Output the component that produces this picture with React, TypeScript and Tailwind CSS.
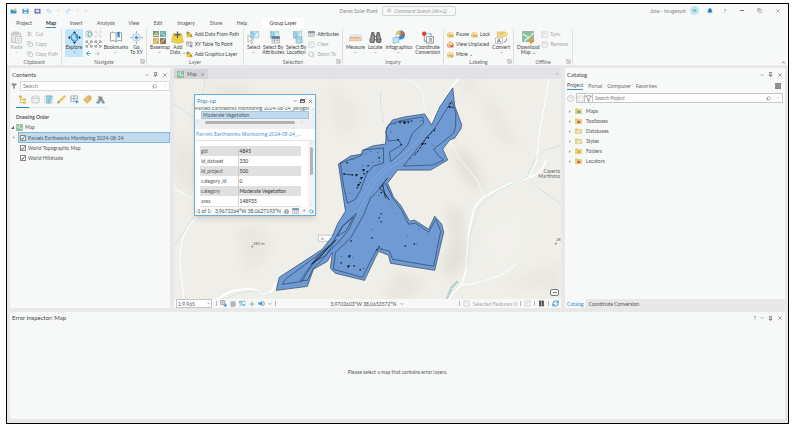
import type { ReactNode } from 'react'
import {
  ArrowLeft,
  ArrowRight,
  Bell,
  Binoculars,
  ChevronDown,
  ChevronUp,
  Copy,
  Filter,
  Pause,
  Pencil,
  Pin,
  Printer,
  Redo2,
  RefreshCw,
  Scissors,
  Search,
  SquareArrowDownRight,
  Tag,
  Undo2,
  X,
} from 'lucide-react'

type IconProps = { className?: string }

const PasteIcon = ({ className = 'size-[13px]' }: IconProps) => (
  <svg viewBox="0 0 24 24" className={className} fill="none" stroke="#b9bbbb" strokeWidth="1.500">
    <path d="M8 4H3v17h6M14 4h5v5" fill="#e6e6e6" />
    <path d="M7 2h8v5H7z" fill="#d4d4d4" />
    <path d="M10 10h11v12H10z" fill="#f4f4f4" />
    <path d="M13 14h5M13 18h5" />
  </svg>
)

const ExploreIcon = () => (
  <svg viewBox="0 0 30 30" className="size-[13px]">
    <circle cx="15" cy="15" r="9" fill="#2f93d6" />
    <path d="M8 12c3-5 7-5 9-3s-1 4 1 6 4 3 1 6-8 0-9-3z" fill="#a6dbf5" />
    <path d="M15 0l4 5h-8zM15 30l4-5h-8zM0 15l5-4v8zM30 15l-5-4v8z" fill="#333" />
  </svg>
)

const ExtentIcon = ({ stroke = '#666' }: { stroke?: string }) => (
  <svg viewBox="0 0 16 16" className="size-2" fill="none" stroke={stroke} strokeWidth="1.500">
    <path d="M2 6V2h4M10 2h4v4M14 10v4h-4M6 14H2v-4M4 4l3 3M12 4L9 7M4 12l3-3M12 12L9 9" />
  </svg>
)

const GlobeIcon = () => (
  <svg viewBox="0 0 16 16" className="size-2">
    <circle cx="8" cy="8" r="7" fill="#d9eef3" stroke="#9aabb0" />
    <path d="M5 3c3 0 3 3 1 5s3 3 2 6M10 3c3 2 4 6 2 8" stroke="#72a87a" strokeWidth="2" fill="none" />
  </svg>
)

const BookmarksIcon = () => (
  <svg viewBox="0 0 28 26" className="h-3 w-[14px]" fill="#fff" stroke="#777" strokeWidth="1.500">
    <path d="M14 5C10 2 6 2 2 4v18c4-2 8-2 12 1 4-3 8-3 12-1V4c-4-2-8-2-12 1zM14 5v18" />
    <path d="M17 2h5v13l-2.500-3-2.500 3z" fill="#2c83c4" stroke="none" />
  </svg>
)

const GoToIcon = () => (
  <svg viewBox="0 0 28 28" className="size-[13px]" fill="none" stroke="#8ab9d8" strokeWidth="1.500">
    <path d="M14 0v28M0 14h28" stroke="#999" />
    <circle cx="14" cy="14" r="8" fill="#eef6fa" />
    <circle cx="14" cy="14" r="3.500" fill="#3a97d3" />
  </svg>
)

const BasemapIcon = () => (
  <svg viewBox="0 0 26 26" className="size-[13px]">
    <path d="M0 0h12v12H0z" fill="#7e9a72" />
    <path d="M14 0h12v12H14z" fill="#6fb0b6" />
    <path d="M0 14h12v12H0z" fill="#d7b56b" />
    <path d="M14 14h12v12H14z" fill="#8d7a5d" />
    <path d="M2 9l5-6 4 6zM16 3l8 7M2 23l8-7M16 24c2-6 5-4 8-9" stroke="#e8dfb9" strokeWidth="2" fill="none" />
  </svg>
)

const AddDataIcon = () => (
  <svg viewBox="0 0 26 26" className="size-[13px]">
    <path d="M4 5h17l4 18-12 2-12-3z" fill="#ecd04a" stroke="#dcb93a" />
    <path d="M13 1v13M6.500 7.500h13" stroke="#545b5c" strokeWidth="2.500" />
  </svg>
)

const PlusLayerIcon = () => (
  <svg viewBox="0 0 16 16" className="size-[7px]">
    <path d="M1 4h10l4 10H1z" fill="#ecc94a" />
    <path d="M4 1v7M1 4h7" stroke="#555" strokeWidth="1.500" />
    <path d="M8 13l4-6 3 6z" fill="#b88c22" />
  </svg>
)

const XyIcon = () => (
  <svg viewBox="0 0 16 16" className="size-[7px]" fill="none" stroke="#777">
    <path d="M1 2h13v9H1zM1 5h13M5 2v9M10 2v9" />
    <circle cx="12" cy="12" r="2.500" fill="#8067ad" stroke="none" />
  </svg>
)

const SelectIcon = ({ variant = 'arrow' }: { variant?: 'arrow' | 'table' | 'location' }) => (
  <svg viewBox="0 0 28 28" className="size-[13px]">
    <path d="M8 1h17v14H8z" fill="#d9f1fa" stroke="#8ca6b0" />
    <path d="M8 1l10 4-4 10H8zM18 5l7-4" fill="#8fd4f1" stroke="#8ca6b0" />
    {variant === 'arrow' && <path d="M2 9v15l4-4 3 7 3-1-3-7h5z" fill="#fff" stroke="#777" />}
    {variant === 'table' && (
      <g stroke="#777" fill="#fff">
        <path d="M11 12h16v14H11zM11 17h16M11 21h16M16 12v14M22 12v14" />
        <path d="M11 12h16v4H11z" fill="#397eb4" />
      </g>
    )}
    {variant === 'location' && (
      <path d="M13 12h13v14H13zM13 18l6-3 7 4" fill="#a9def4" stroke="#7c99a5" />
    )}
  </svg>
)

const TableIcon = () => (
  <svg viewBox="0 0 16 14" className="h-[6px] w-[7px]" fill="#fff" stroke="#8a8f91">
    <path d="M1 1h14v12H1zM1 5h14M1 9h14M6 1v12M11 1v12" />
    <path d="M1 1h14v3H1z" fill="#4287bd" />
  </svg>
)

const DimIcon = () => (
  <svg viewBox="0 0 16 16" className="size-[7px]" fill="none" stroke="#c5c8c8" strokeWidth="1.500">
    <path d="M2 2h12v12H2zM5 10l5-5M5 5h3" />
  </svg>
)

const AddGridIcon = () => (
  <svg viewBox="0 0 16 16" className="size-[7px]" fill="none" stroke="#87909a" strokeWidth="1.500">
    <path d="M1 1h10v9H1zM1 5h10M6 1v9" />
    <path d="M12 8v8M8 12h8" stroke="#2788c9" strokeWidth="2" />
  </svg>
)

const MeasureIcon = () => (
  <svg viewBox="0 0 28 28" className="size-[13px]">
    <path d="M1 13h26v8H1z" fill="#f6d8bf" stroke="#d4946b" />
    <path d="M5 13v4M9 13v5M13 13v4M17 13v5M21 13v4" stroke="#b0734c" />
    <path d="M1 9h26" stroke="#9cc0d0" />
  </svg>
)

const InfographicsIcon = () => (
  <svg viewBox="0 0 28 28" className="size-[14px]">
    <circle cx="17" cy="10" r="9" fill="#318fd0" />
    <path d="M17 10V1a9 9 0 00-8 5z" fill="#f0c238" />
    <path d="M17 10L9 6a9 9 0 002 11z" fill="#eee" stroke="#999" />
    <path d="M17 10h9a9 9 0 00-6-8z" fill="#de5d3c" />
    <path d="M2 15h12v10H7l-3 3v-3H2z" fill="#bfe4f6" stroke="#6ba7c8" />
  </svg>
)

const CoordinateIcon = () => (
  <svg viewBox="0 0 28 28" className="size-[13px]" fill="none" stroke="#6d7376" strokeWidth="1.500">
    <path d="M7 8v14h6M12 12h15v14H12zM17 16h7M17 19h7M17 22h7" />
    <circle cx="7" cy="6" r="5" fill="#d4482f" stroke="none" />
    <path d="M14 6h8v6" stroke="#3a8fc9" />
  </svg>
)

const LabelLockIcon = ({ tint = '#e3b23c' }: { tint?: string }) => (
  <svg viewBox="0 0 16 16" className="size-[7px]">
    <path d="M1 7l6-5 7 4v8H2z" fill="#fbe8b4" stroke={tint} strokeWidth="1.500" />
    <path d="M8 9h6v5H8z" fill={tint} />
    <path d="M4 12l2-5 2 5" stroke="#666" fill="none" />
  </svg>
)

const ConvertIcon = () => (
  <svg viewBox="0 0 28 28" className="size-[13px]">
    <path d="M5 2h17l5 5-5 5H5z" fill="#f6dc8a" stroke="#c69d31" />
    <path d="M9 6h9" stroke="#a8811e" />
    <path d="M1 15h15v12H1z" fill="#fff" stroke="#777" />
    <path d="M5 25l3.500-8 3.500 8M6 22h5M19 24c5 0 6-4 6-8" stroke="#555" fill="none" strokeWidth="1.500" />
  </svg>
)

const DownloadMapIcon = () => (
  <svg viewBox="0 0 28 28" className="size-[13px]">
    <path d="M1 1h24v22H1z" fill="#8bc09c" stroke="#6c8d77" />
    <path d="M1 8c8-2 7 7 15 5s3-8 9-8M6 23c0-7 6-5 8-8" stroke="#dff0f4" strokeWidth="3" fill="none" />
    <path d="M20 10v15M14 20l6 6 6-6" stroke="#e89532" strokeWidth="3" fill="none" />
  </svg>
)

const MapThumb = () => (
  <svg viewBox="0 0 16 16" className="size-[7px] shrink-0">
    <path d="M1 1h14v14H1z" fill="#8fc5a0" stroke="#7c8c82" />
    <path d="M1 6c6 0 5 5 14 4M8 1v5" stroke="#e5f3ee" strokeWidth="2" fill="none" />
  </svg>
)

const FolderIcon = ({ accent }: { accent: string }) => (
  <svg viewBox="0 0 18 16" className="h-[6px] w-[7px]">
    <path d="M1 2h6l2 2h8v11H1z" fill="#eed06b" stroke="#d1ad43" />
    <path d="M5 7h9v7H5z" fill={accent} stroke="#fff" strokeWidth=".7" />
  </svg>
)

const Divider = () => <span className="h-[5px] w-px bg-[#b5b8b8]" />

const PaneControls = ({ help = false }: { help?: boolean }) => (
  <div className="flex items-center gap-1 text-[#555]">
    {help && <button aria-label="Help">?</button>}
    <button aria-label="Pane options">
      <ChevronDown className="size-1" strokeWidth={3} />
    </button>
    <button aria-label="Pin">
      <Pin className="size-[5px]" strokeWidth={3} />
    </button>
    <button aria-label="Close">
      <X className="size-[6px]" strokeWidth={2} />
    </button>
  </div>
)

type BigButtonProps = { icon: ReactNode; lines: string[]; drop?: boolean; className?: string }

const BigButton = ({ icon, lines, drop = false, className = 'text-[#444]' }: BigButtonProps) => (
  <button className={`flex h-7 shrink-0 flex-col items-center whitespace-nowrap ${className}`}>
    <span className="flex h-4 items-center">{icon}</span>
    {lines.map((line) => (
      <span key={line} className="leading-[5px]">
        {line}
      </span>
    ))}
    {drop && <ChevronDown className="mt-px size-[3px]" strokeWidth={3} />}
  </button>
)

const SmallButton = ({ icon, label, muted = false }: { icon: ReactNode; label: string; muted?: boolean }) => (
  <button className={`flex h-[10px] items-center gap-[2px] whitespace-nowrap ${muted ? 'text-[#a5a7a7]' : 'text-[#444]'}`}>
    {icon}
    {label}
  </button>
)

type GroupProps = { label: string; className: string; launcher?: boolean; children: ReactNode }

const RibbonGroup = ({ label, className, launcher = false, children }: GroupProps) => (
  <div className={`flex shrink-0 flex-col border-r border-[#dfe1e1] ${className}`}>
    <div className="flex h-[29px] items-start justify-between px-[3px]">{children}</div>
    <div className="relative pt-px text-center leading-[6px] text-[#666]">
      {label}
      {launcher && <SquareArrowDownRight className="absolute top-px right-px size-[5px] text-[#888]" />}
    </div>
  </div>
)

const tabs = [
  { name: 'Project', width: 'w-8' },
  { name: 'Map', width: 'w-[22px]', active: true },
  { name: 'Insert', width: 'w-7' },
  { name: 'Analysis', width: 'w-8' },
  { name: 'View', width: 'w-6' },
  { name: 'Edit', width: 'w-6' },
  { name: 'Imagery', width: 'w-8' },
  { name: 'Share', width: 'w-7' },
  { name: 'Help', width: 'w-6' },
]

const TitleBar = () => (
  <header className="flex h-[13px] items-center px-[3px]">
    <div className="flex flex-1 items-center gap-[5px] text-[#2d87c5]">
      <svg viewBox="0 0 16 14" className="h-[6px] w-[7px]">
        <path d="M1 4h6l1 2h7v7H1z" fill="#3b95cf" />
        <circle cx="12" cy="4" r="3" fill="#edc23b" />
      </svg>
      <svg viewBox="0 0 16 14" className="h-[6px] w-[7px]">
        <path d="M1 2h14v11H1z" fill="#3b8fc6" />
        <path d="M4 2h8v4H4zM4 9h8v4H4z" fill="#dceffa" />
      </svg>
      <svg viewBox="0 0 16 14" className="h-[6px] w-[7px]">
        <path d="M1 2h14v11H1z" fill="#6a64a3" />
        <path d="M4 4h8v6H4z" fill="#e2e0f3" />
      </svg>
      <Undo2 className="size-[6px] text-[#a5cfe8]" strokeWidth={3} />
      <ChevronDown className="size-[3px] text-[#999]" strokeWidth={3} />
      <Redo2 className="size-[6px] text-[#a5cfe8]" strokeWidth={3} />
      <ChevronDown className="size-[3px] text-[#999]" strokeWidth={3} />
      <ChevronDown className="size-1 text-[#777]" />
    </div>
    <span className="mr-1 text-[#888]">Demo Solar Plant</span>
    <label className="flex h-[10px] w-[74px] items-center gap-[3px] rounded-xs border border-[#d2d5d5] px-1">
      <Search className="size-[5px] -scale-x-100 text-[#666]" />
      <input
        aria-label="Command Search"
        placeholder="Command Search (Alt+Q)"
        className="w-full min-w-0 italic outline-none placeholder:text-[#a0a3a3]"
      />
    </label>
    <div className="flex flex-1 items-center justify-end text-[#666]">
      <span className="text-[#888]">Jose - Imagesyst</span>
      <span className="mr-2 ml-[4px] flex size-[9px] items-center justify-center rounded-full bg-[#bfe7ef] text-[4px] text-[#4d838e]">
        JE
      </span>
      <Bell className="mr-[11px] size-[6px] text-[#2380c8]" fill="#2380c8" />
      <span className="mr-[14px]">?</span>
      <button aria-label="Minimize" className="mr-[13px] h-px w-1 bg-[#777]" />
      <button aria-label="Restore">
        <Copy className="mr-[13px] size-[5px]" />
      </button>
      <button aria-label="Close window">
        <X className="mr-1 size-[6px]" />
      </button>
    </div>
  </header>
)

const Ribbon = () => (
  <div className="flex overflow-hidden pt-px">
    <RibbonGroup label="Clipboard" className="w-[55px]">
      <BigButton icon={<PasteIcon />} lines={['Paste']} drop className="text-[#a5a7a7]" />
      <div>
        <SmallButton muted icon={<Scissors className="size-[6px]" />} label="Cut" />
        <SmallButton muted icon={<Copy className="size-[6px]" />} label="Copy" />
        <SmallButton muted icon={<Copy className="size-[6px]" />} label="Copy Path" />
      </div>
    </RibbonGroup>
    <RibbonGroup label="Navigate" className="w-[85px]" launcher>
      <BigButton icon={<ExploreIcon />} lines={['Explore']} drop className="w-[18px] bg-[#c2e5f8] text-[#444]" />
      <div className="grid grid-cols-2 gap-x-px gap-y-[2px] pt-px">
        <GlobeIcon />
        <ExtentIcon stroke="#cfd2d2" />
        <ExtentIcon />
        <ExtentIcon />
        <ArrowLeft className="size-[7px] text-[#3a97d3]" strokeWidth={3} />
        <ArrowRight className="size-[7px] text-[#c4c8c8]" strokeWidth={3} />
      </div>
      <BigButton icon={<BookmarksIcon />} lines={['Bookmarks']} drop />
      <BigButton icon={<GoToIcon />} lines={['Go', 'To XY']} />
    </RibbonGroup>
    <RibbonGroup label="Layer" className="w-[97px]">
      <BigButton icon={<BasemapIcon />} lines={['Basemap']} drop />
      <BigButton icon={<AddDataIcon />} lines={['Add', 'Data ⌄']} />
      <div className="mr-px">
        <SmallButton icon={<PlusLayerIcon />} label="Add Data From Path" />
        <SmallButton icon={<XyIcon />} label="XY Table To Point" />
        <SmallButton icon={<PlusLayerIcon />} label="Add Graphics Layer" />
      </div>
    </RibbonGroup>
    <RibbonGroup label="Selection" className="w-[99px]" launcher>
      <BigButton icon={<SelectIcon />} lines={['Select']} drop />
      <BigButton icon={<SelectIcon variant="table" />} lines={['Select By', 'Attributes']} />
      <BigButton icon={<SelectIcon variant="location" />} lines={['Select By', 'Location']} />
      <div>
        <SmallButton icon={<TableIcon />} label="Attributes" />
        <SmallButton muted icon={<DimIcon />} label="Clear" />
        <SmallButton muted icon={<Search className="size-[7px]" />} label="Zoom To" />
      </div>
    </RibbonGroup>
    <RibbonGroup label="Inquiry" className="w-[101px]">
      <BigButton icon={<MeasureIcon />} lines={['Measure']} drop />
      <BigButton icon={<Binoculars className="size-[13px] text-[#666]" fill="#999" />} lines={['Locate']} drop />
      <BigButton icon={<InfographicsIcon />} lines={['Infographics']} drop />
      <BigButton icon={<CoordinateIcon />} lines={['Coordinate', 'Conversion']} />
    </RibbonGroup>
    <RibbonGroup label="Labeling" className="w-[70px]" launcher>
      <div>
        <div className="flex gap-[2px]">
          <SmallButton icon={<LabelLockIcon />} label="Pause" />
          <SmallButton icon={<LabelLockIcon />} label="Lock" />
        </div>
        <SmallButton icon={<LabelLockIcon tint="#d76842" />} label="View Unplaced" />
        <SmallButton icon={<LabelLockIcon />} label="More ⌄" />
      </div>
      <BigButton icon={<ConvertIcon />} lines={['Convert']} drop />
    </RibbonGroup>
    <RibbonGroup label="Offline" className="w-[59px]" launcher>
      <BigButton icon={<DownloadMapIcon />} lines={['Download', 'Map ⌄']} />
      <div className="mr-px">
        <SmallButton muted icon={<DimIcon />} label="Sync" />
        <SmallButton muted icon={<DimIcon />} label="Remove" />
      </div>
    </RibbonGroup>
    <button aria-label="Collapse ribbon" className="mr-[2px] ml-auto self-end">
      <ChevronUp className="size-[5px] text-[#444]" strokeWidth={3} />
    </button>
  </div>
)

const layers = [
  { name: 'Parcels Earthworks Monitoring 2024-08-24', selected: true },
  { name: 'World Topographic Map', selected: false },
  { name: 'World Hillshade', selected: false },
]

const ContentsPane = () => (
  <aside className="w-40 shrink-0 bg-[#f7f9f8]">
    <div className="flex h-[13px] items-center justify-between px-[2px]">
      <h2 className="text-[6px] text-[#444]">Contents</h2>
      <PaneControls />
    </div>
    <div className="flex items-center gap-[3px] pl-px">
      <Filter className="size-[6px] text-[#777]" fill="#999" />
      <label className="flex h-[10px] flex-1 items-center border border-[#dadcdc] bg-white px-[2px]">
        <input aria-label="Search layers" placeholder="Search" className="w-full min-w-0 outline-none placeholder:text-[#777]" />
        <Search className="mr-[6px] size-[5px] shrink-0 -scale-x-100 text-[#555]" />
        <ChevronDown className="size-1 shrink-0 text-[#888]" />
      </label>
    </div>
    <div className="ml-[6px] flex h-[17px] w-[91px] items-center gap-[4px] border-b border-[#e2e4e4] pl-[2px]">
      <span className="relative flex h-full items-center">
        <svg viewBox="0 0 20 20" className="size-[9px]">
          <path d="M2 1h7v5H2zM10 8h8v4h-8zM10 15h8v4h-8z" fill="#e9b730" />
          <path d="M5 6v11h5M5 10h5" stroke="#8c8055" fill="none" />
        </svg>
        <span className="absolute -right-[2px] -bottom-px -left-[2px] h-px bg-[#2b8bd0]" />
      </span>
      <svg viewBox="0 0 20 20" className="size-[9px]" fill="#efefef" stroke="#999">
        <path d="M2 5v11c2 3 14 3 16 0V5" />
        <ellipse cx="10" cy="5" rx="8" ry="3" />
      </svg>
      <svg viewBox="0 0 20 20" className="size-[9px]" stroke="#8aa0a8">
        <path d="M2 2h16v16H2z" fill="#fff" />
        <path d="M5 2h13L14 18H6zM14 2L9 18" fill="#89d2ee" />
      </svg>
      <svg viewBox="0 0 20 20" className="size-[9px]">
        <path d="M16 1l3 3L6 16l-5 3 2-5z" fill="#f0cc55" stroke="#cfa436" />
        <path d="M1 19l2-5 3 2z" fill="#777" />
      </svg>
      <svg viewBox="0 0 20 20" className="size-[9px]" fill="none" stroke="#87909a" strokeWidth="1.500">
        <path d="M2 2h15v8M2 2v13h8M2 8h15M9 2v13" />
        <path d="M15 11v8M11 15h8" stroke="#2788c9" strokeWidth="2" />
      </svg>
      <Tag className="size-[9px] -scale-x-100 text-[#c8964a]" fill="#eabd6a" strokeWidth={1} />
      <svg viewBox="0 0 20 20" className="size-[9px]">
        <path d="M2 16L6 3h8l4 13z" fill="#b4b8b8" />
        <path d="M6 3l10 12M12 5L6 15" stroke="#555" strokeWidth="1.500" />
        <path d="M1 15h7v4H1zM14 14h5v5h-5z" fill="#4e9bc2" />
      </svg>
    </div>
    <h3 className="pt-[6px] pl-[6px] leading-[7px] font-bold text-[#555]">Drawing Order</h3>
    <div className="mt-px flex h-[10px] items-center gap-[2px] pl-px">
      <svg viewBox="0 0 6 6" className="size-[3px]">
        <path d="M6 0v6H0z" fill="#555" />
      </svg>
      <MapThumb />
      <span>Map</span>
    </div>
    <ul className="ml-[3px]">
      {layers.map((layer) => (
        <li key={layer.name} className="flex items-center">
          <span className="flex w-[5px]">
            {layer.selected && (
              <svg viewBox="0 0 4 6" className="h-[3px] w-[2px]">
                <path d="M0 0l4 3-4 3z" fill="#aaa" />
              </svg>
            )}
          </span>
          <label
            className={`flex flex-1 items-center gap-[2px] border pl-px whitespace-nowrap ${layer.selected ? 'h-[11px] border-[#84b7e0] bg-[#c2daee]' : 'h-[10px] border-transparent'}`}
          >
            <span className="relative flex size-[6px] items-center justify-center border border-[#888] bg-white">
              <input type="checkbox" defaultChecked className="peer absolute inset-0 appearance-none" />
              <svg viewBox="0 0 8 8" className="hidden size-1 peer-checked:block" fill="none" stroke="#333" strokeWidth="1.500">
                <path d="M1 4l2 3 4-6" />
              </svg>
            </span>
            {layer.name}
          </label>
        </li>
      ))}
    </ul>
  </aside>
)

const attributes = [
  ['gid', '4845'],
  ['id_dataset', '330'],
  ['id_project', '500'],
  ['category_id', '0'],
  ['category', 'Moderate Vegetation'],
  ['area', '148935'],
]

const PopUp = () => (
  <section className="absolute top-[15px] left-5 flex h-[122px] w-[122px] flex-col border border-[#69addb] bg-white shadow-md">
    <div className="flex h-3 shrink-0 items-center bg-[#f7f9f8] px-[2px]">
      <h2 className="flex-1 text-[6px] text-[#3a8fcb]">Pop-up</h2>
      <div className="flex items-center gap-[3px] text-[#555]">
        <ChevronDown className="size-1" strokeWidth={3} />
        <span className="h-1 w-[5px] border border-t-2 border-[#666]" />
        <X className="size-[5px]" strokeWidth={3} />
      </div>
    </div>
    <div className="flex h-3 shrink-0">
      <div className="flex flex-1 flex-col justify-end overflow-hidden whitespace-nowrap">
        <div className="h-1 overflow-hidden">
          <p className="-mt-px leading-[5px]">Parcels Earthworks Monitoring 2024-08-24_polygons</p>
        </div>
        <p className="ml-[6px] h-2 border border-[#9cc5e3] bg-[#c2daee] pl-px leading-[6px]">Moderate Vegetation</p>
      </div>
      <div className="flex w-[6px] flex-col items-center justify-between bg-[#f3f3f3] py-px text-[#777]">
        <ChevronUp className="size-[3px]" />
        <ChevronDown className="size-[3px]" />
      </div>
    </div>
    <div className="flex h-[6px] shrink-0 items-center justify-between bg-[#efefef] px-[2px] text-[4px]">
      ‹<span className="h-[3px] w-[90px] rounded-full bg-[#b2b2b2]" />›
      <span className="w-1" />
    </div>
    <div className="h-[4px] shrink-0 bg-[#efefef]" />
    <h3 className="h-[11px] shrink-0 overflow-hidden px-px font-['Open_Sans',sans-serif] leading-[11px] whitespace-nowrap text-[#3a8fcb]">
      Parcels Earthworks Monitoring 2024-08-24_...
    </h3>
    <div className="flex min-h-0 flex-1 border-t border-[#e4e6e6]">
      <div className="min-w-0 flex-1 overflow-hidden pt-[5px] pr-[7px] pl-[5px]">
        <table className="w-full border-collapse">
          <tbody>
            {attributes.map(([key, value]) => (
              <tr key={key} className="h-[10px] odd:bg-[#e0e0e0]">
                <th scope="row" className="w-[38px] border-r border-[#cfcfcf] pl-px text-left font-normal">
                  {key}
                </th>
                <td className="pl-px text-[#333]">{value}</td>
              </tr>
            ))}
          </tbody>
        </table>
        <div className="h-1 bg-[#e0e0e0]" />
      </div>
      <div className="flex w-[7px] flex-col items-center bg-[#f3f3f3] py-px text-[#777]">
        <ChevronUp className="size-[3px]" />
        <span className="mt-[2px] h-7 w-[3px] rounded-full bg-[#b2b2b2]" />
        <ChevronDown className="mt-auto size-[3px]" />
      </div>
    </div>
    <footer className="flex h-2 shrink-0 items-center justify-between bg-[#f7f9f8] px-px whitespace-nowrap">
      <span>‹1 of 1›</span>
      <span>3,9672264°W 38,0627193°N</span>
      <Printer className="size-[5px] shrink-0" />
      <TableIcon />
      <span className="text-[#c94f3f]">+</span>
      <Search className="size-[5px] shrink-0 text-[#2b8bd0]" strokeWidth={3} />
    </footer>
  </section>
)

// Small vegetation patches inside the parcels: x, y, size
const patches = [
  [399, 122, 2], [403, 122, 3], [407, 122, 2], [411, 121, 1], [394, 124, 1], [420, 120, 1], [390, 131, 1], [397, 139, 2], [400, 144, 2],
  [449, 103, 2], [448, 106, 3], [451, 107, 2], [433, 130, 2], [430, 133, 1], [427, 137, 2], [421, 143, 3], [424, 143, 2], [420, 147, 1],
  [415, 152, 1], [432, 145, 1], [410, 158, 1], [377, 152, 1], [378, 157, 2], [379, 161, 1], [365, 153, 1], [370, 151, 1], [346, 162, 2],
  [353, 159, 1], [343, 173, 2], [347, 174, 1], [351, 174, 2], [355, 174, 3], [362, 169, 3], [366, 171, 2], [363, 173, 2], [360, 177, 3],
  [357, 184, 3], [359, 182, 2], [356, 187, 2], [349, 193, 1], [362, 165, 1], [367, 165, 2], [372, 162, 1], [380, 192, 2], [378, 195, 1],
  [380, 213, 2], [378, 217, 2], [380, 221, 2], [371, 237, 2], [404, 245, 2], [406, 236, 1], [413, 243, 2], [416, 244, 1], [367, 213, 1],
  [396, 213, 1], [378, 246, 2], [381, 248, 1], [376, 249, 2], [350, 240, 2], [348, 255, 3], [352, 257, 1], [347, 265, 3], [340, 262, 2],
  [338, 267, 1], [353, 265, 2], [341, 256, 1], [359, 269, 2], [363, 268, 1], [372, 229, 1], [418, 229, 1], [389, 204, 1], [386, 198, 1],
]

const MapCanvas = () => (
  <svg viewBox="174 79 386 220" preserveAspectRatio="xMidYMid slice" className="absolute inset-0 size-full">
    <defs>
      <filter id="soft" x="-50%" y="-50%" width="200%" height="200%">
        <feGaussianBlur stdDeviation="6" />
      </filter>
    </defs>
    <rect x="174" y="79" width="386" height="220" fill="#efeee8" />
    <g filter="url(#soft)" opacity=".7">
      <path d="M205 79l40 8 20 18-30 6zM174 130l25 30v40l-25-20z" fill="#e6e4db" />
      <path d="M236 230l24-8 12 30-25 24z" fill="#e7e5dc" />
      <path d="M450 145l20 8 15 38-15-4-12-20z" fill="#dcdacd" />
      <path d="M445 205l16 6 4 45-14 25-9-15 10-30z" fill="#dddbcf" />
      <path d="M475 90l25 20 20 40-22-10zM455 79l25 2-10 18z" fill="#e6e4db" />
      <path d="M330 85l30 25-10 30-20-20z" fill="#e8e6de" />
      <path d="M490 225l35-10-10 38-24 15z" fill="#f4f3ee" />
      <path d="M395 270l30 10-16 19h-25z" fill="#e4e2d8" />
      <path d="M500 285l60-25v30z" fill="#e8e5dc" />
    </g>
    <g fill="none" stroke="#fff" strokeLinecap="round" strokeLinejoin="round" strokeWidth="1">
      <path d="M457 79c-8 12-18 24-27 44" strokeWidth="1.500" />
      <path d="M402 79l12 5 8 7 2 16 3 11M449 141l10 18 18 22 5 14" opacity=".6" />
      <path d="M545 160c-2 8-6 14-18 18l-19 6-26 13-9 12-5 22-2 36-5 17-13 14" strokeWidth="1.500" />
      <path d="M461 285l14-2 25-8 15-11M528 178l8-18 2-24 10-57" />
      <path d="M194 220c-9 7-15 25-14 44l4 35" />
      <path d="M174 189c8 1 10 8 19 8" />
      <path d="M217 299c10-8 21-12 37-10 8 4 18 8 21-6" strokeWidth="2" />
    </g>
    <g fill="none" stroke="#b5dfe2" strokeWidth=".8" strokeDasharray="2.500 1">
      <path d="M560 145l-16 5-10 9-8 18-28 13-19 16-10 30-3 32" />
      <path d="M528 178l12 12 20 14M380 92v12l3 18M174 104l20 14M205 79l-2 15M174 246l20-30" />
      <path d="M225 299c10-6 24-11 43-6" />
    </g>
    <path d="M457 281l-6 6-5 12" fill="none" stroke="#a9cdd1" strokeWidth="2.500" strokeDasharray="2 .5" />
    <path d="M318 235h14v6h-14z" fill="#fff" stroke="#aaa" strokeWidth=".6" />
    <text x="320" y="240" fontSize="4" fill="#777">Jn</text>

    <g strokeLinejoin="round">
      <path
        d="M452 88l2 18 7 19-1 4-6 9-5 2-7 9 5 11-17 10h-33l-10 13 6 14 7 8 9 16 5-1 14 9 6-13 7 8 2 8-9 38-44-7-2-8-10-4-3 6-11 23-29-7-5-5 2-16-5 9-14 8-6 17-31 4 3-13 43-28 10-13 5-12 8-13-7-47 12-8 12-2 1-4 9-4 13-2 1-16 6-8 12-3 20-3 7 11 8-18z"
        fill="#6f9ad3"
        stroke="#3b5577"
        strokeWidth=".8"
      />
      <g fill="none" stroke="#7da6dd" strokeWidth="1">
        <path d="M430 128c-8 22-25 30-39 39-16 10-22 25-30 39-6 10-14 17-22 31l-34 28" />
        <path d="M427 124c-10 22-22 29-37 39-18 14-26 27-34 42" />
      </g>
      <g fill="none" stroke="#2d4567" strokeWidth=".7">
        <path d="M451 101l4 12v13l-2 7-12 10-8 6 4 6 6 5-11 5-29 1 10-13 10-12 10-11z" />
        <path d="M385 132l3-7 11-4 23-4 1 6-11 10-5 12-9 10-8 7-1-10 12-7-3-5-10 1z" />
        <path d="M340 163l20-7 2-6 21-2v15l-10 3-7 8-6 16-5 9-8 4-4-18z" />
        <path d="M385 183l7 15 9 12 7 14 7-1 13 9 7-13 5 12-7 35-41-7-3-8-12-3-7 13-8 16-29-8 2-17 15-14 13-23 7-17z" />
        <path d="M356 213l-8 17-10 12-14 14-8 4-10 13-4 8-20 3 3-5 31-23 15-12 11-18z" />
        <path d="M353 217l-11 9-5 10 8-5zM335 240l-17 15-8 11-10 14h7l6-12 13-13z" />
      </g>
      <g fill="none" stroke="#0f1b2f" strokeWidth=".8">
        <path d="M387 178l-8 10 5 5 5 7M382 184l3 14M336 239l-16 16-9 9 7-5 12-14" />
        <path d="M398 122l14-1M435 128l-9 9-7 12-6 7M343 174l10 1" strokeDasharray="3 1" />
      </g>
      {patches.map(([x, y, size]) => (
        <path
          key={`${x}-${y}`}
          d={`M${x} ${y}h${size * 0.8}l-${size * 0.3} ${size * 0.7}h-${size * 0.5}z`}
          fill="#10192b"
        />
      ))}
    </g>

    <g fontSize="4" fill="#666">
      <path d="M251 247l1-2 1 2zM554 244l1-2 1 2z" />
      <text x="253" y="245">283 m</text>
      <text x="555" y="241">28</text>
      <g fontSize="5" textAnchor="end">
        <text x="559" y="173">Caserío</text>
        <text x="559" y="178">Martinmo</text>
      </g>
    </g>
  </svg>
)

const MapPane = () => (
  <main className="flex min-w-0 flex-1 flex-col">
    <div className="flex h-[11px] items-end bg-[#e2e3e6]">
      <div className="flex h-[10px] items-center gap-[3px] bg-[#d4d5da] px-[3px]">
        <MapThumb />
        <span>Map</span>
        <button aria-label="Close map">
          <X className="size-[5px]" />
        </button>
      </div>
      <ChevronDown className="mr-[2px] mb-[3px] ml-auto size-1" />
    </div>
    <div className="relative flex-1 overflow-hidden">
      <MapCanvas />
      <PopUp />
      <button
        aria-label="Notifications"
        className="absolute right-[2px] bottom-[3px] flex h-[7px] w-[9px] items-center justify-center rounded-xs border border-[#777] bg-white/70"
      >
        <span className="h-px w-1 bg-[#777]" />
      </button>
    </div>
    <div className="flex h-[9px] items-center gap-[3px] bg-[#f7f9f8] px-[2px] whitespace-nowrap">
      <label className="relative mr-px flex h-[9px] w-9 items-center border border-[#c3c6c6] bg-white">
        <select aria-label="Map scale" className="w-full appearance-none pl-px outline-none">
          <option>1:9.965</option>
        </select>
        <ChevronDown className="pointer-events-none absolute right-px size-[3px]" strokeWidth={4} />
      </label>
      <Divider />
      <AddGridIcon />
      <svg viewBox="0 0 16 16" className="size-[6px]" stroke="#999" strokeWidth="2">
        <path d="M2 2h12M2 6h12M2 10h12M2 14h12M3 2v12M8 2v12M13 2v12" />
      </svg>
      <svg viewBox="0 0 16 16" className="size-[7px]" fill="none" stroke="#398fc7" strokeWidth="1.500">
        <path d="M1 3h6v4H1zM9 3h6M10 9l5 5M1 14l6-5 3 5 5-6" />
      </svg>
      <svg viewBox="0 0 16 16" className="size-[6px]" stroke="#69a07a" strokeWidth="2">
        <path d="M8 1v14M1 8h14" />
      </svg>
      <svg viewBox="0 0 16 16" className="size-[7px]">
        <path d="M1 5h5l4-4v14l-4-4H1z" fill="#3e9bd3" />
        <path d="M12 3c3 3 3 7 0 10" stroke="#7a8b94" strokeWidth="2" fill="none" />
      </svg>
      <ChevronDown className="size-1" strokeWidth={3} />
      <Divider />
      <span className="flex flex-1 items-center justify-center gap-1">
        3,9702603°W 38,0653572°N
        <ChevronDown className="size-1" strokeWidth={3} />
      </span>
      <Divider />
      <DimIcon />
      <span className="text-[#a5a8a8]">Selected Features: 0</span>
      <Divider />
      <DimIcon />
      <Divider />
      <button aria-label="Pause drawing">
        <Pause className="size-[7px] text-[#444]" fill="#444" />
      </button>
      <Divider />
      <button aria-label="Refresh">
        <RefreshCw className="size-[7px] text-[#2b8bd0]" strokeWidth={3} />
      </button>
    </div>
  </main>
)

const catalogItems = [
  { name: 'Maps', accent: '#5fa477' },
  { name: 'Toolboxes', accent: '#cf5b3d' },
  { name: 'Databases', accent: '#e0e0dc' },
  { name: 'Styles', accent: '#d9e8df' },
  { name: 'Folders', accent: '#d9a916' },
  { name: 'Locators', accent: '#d9583f' },
]

const CatalogPane = () => (
  <aside className="flex w-[220px] shrink-0 flex-col bg-[#f7f9f8]">
    <div className="flex h-[13px] items-center justify-between px-[2px]">
      <h2 className="text-[6px] text-[#444]">Catalog</h2>
      <PaneControls />
    </div>
    <nav className="flex h-[9px] items-center gap-[5px] px-[2px] font-['Open_Sans',sans-serif]">
      <a href="#project" className="border-b border-[#3f93d2] leading-[8px] text-[#333]">
        Project
      </a>
      <a href="#portal">Portal</a>
      <a href="#computer">Computer</a>
      <a href="#favorites">Favorites</a>
      <svg viewBox="0 0 12 12" className="mr-[2px] ml-auto size-[6px]">
        <path d="M0 0h12v12H0z" fill="#8a8a8a" />
        <path d="M0 4h12M0 8h12" stroke="#aaa" />
      </svg>
    </nav>
    <div className="mt-[3px] flex h-[10px] items-center gap-[2px] px-[2px]">
      <button aria-label="Back" className="flex size-[7px] items-center justify-center rounded-full border border-[#c5c8c8] text-[#bbb]">
        <ArrowLeft className="size-1" />
      </button>
      <div className="flex h-[10px] flex-1 items-center border border-[#c5c8c8] bg-white">
        <button aria-label="Up" className="flex h-full w-2 items-center justify-center border-r border-[#c5c8c8]">
          <DimIcon />
        </button>
        <button aria-label="Filter" className="flex h-full w-[9px] items-center justify-center border-r border-[#c5c8c8]">
          <Filter className="size-[7px] text-[#555]" />
        </button>
        <input
          aria-label="Search Project"
          placeholder="Search Project"
          className="ml-[2px] w-full min-w-0 italic outline-none placeholder:text-[#777]"
        />
        <Search className="mr-[5px] size-[5px] shrink-0 -scale-x-100 text-[#555]" />
        <ChevronDown className="mr-[2px] size-1 shrink-0" />
      </div>
    </div>
    <ul className="flex-1 pt-[3px] pl-1">
      {catalogItems.map((item) => (
        <li key={item.name} className="flex h-[10px] items-center gap-1">
          <svg viewBox="0 0 4 6" className="h-[3px] w-[2px]">
            <path d="M0 0l4 3-4 3z" fill="#aaa" />
          </svg>
          <FolderIcon accent={item.accent} />
          {item.name}
        </li>
      ))}
    </ul>
    <div className="flex h-[9px] items-center bg-[#e8e8e8]">
      <button className="h-full bg-[#f7f9f8] px-[2px] text-[#2b8bd0]">Catalog</button>
      <button className="px-[3px]">Coordinate Conversion</button>
    </div>
  </aside>
)

const App = () => (
  <div className="flex min-h-screen flex-col bg-white pt-[3px] pr-2 pb-px pl-[6px] font-[Lato,'Open_Sans',sans-serif] text-[5px] leading-[6px] text-[#555]">
    <div className="flex flex-1 flex-col border border-black bg-[#e8e8e8]">
      <div className="bg-[#f7f9f8]">
        <TitleBar />
        <nav className="flex h-[11px] items-end pl-px text-center">
          {tabs.map((tab) => (
            <button key={tab.name} className={`${tab.width} ${tab.active ? 'font-bold text-[#333]' : ''}`}>
              <span className={`inline-block border-b leading-[8px] ${tab.active ? 'border-[#2b8bd0]' : 'border-transparent'}`}>
                {tab.name}
              </span>
            </button>
          ))}
          <button className="ml-2 h-[10px] w-[42px] bg-white text-[#333]">Group Layer</button>
        </nav>
        <Ribbon />
      </div>
      <div className="grid flex-1 grid-rows-[9fr_4fr] gap-1 px-[3px] pt-[3px] pb-1">
        <div className="flex min-w-0 gap-1">
          <ContentsPane />
          <MapPane />
          <CatalogPane />
        </div>
        <section className="flex flex-col bg-[#f7f9f8]">
          <div className="flex h-3 items-center justify-between px-[2px]">
            <h2 className="text-[6px] text-[#444]">Error Inspector: Map</h2>
            <PaneControls help />
          </div>
          <p className="flex flex-1 items-center justify-center">Please select a map that contains error layers.</p>
        </section>
      </div>
    </div>
  </div>
)

export default App
